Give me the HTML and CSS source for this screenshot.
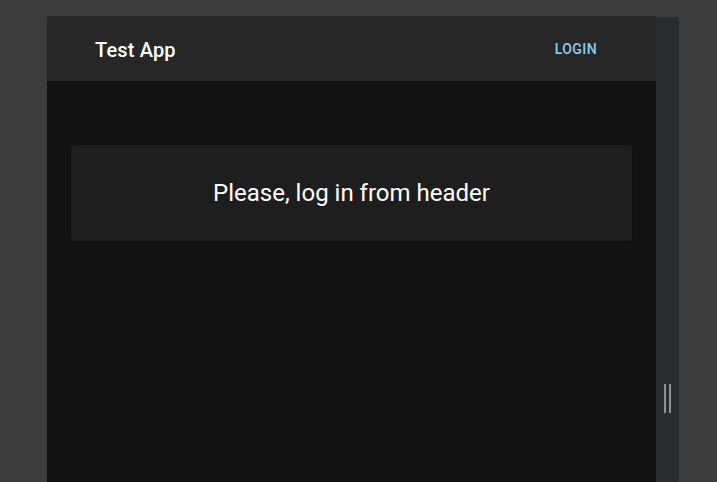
FILE: index.html
```html
<!DOCTYPE html>
<html>
<head>
<meta charset="utf-8">
<link rel="stylesheet" href="styles.css">
</head>
<body>
<div class="stage">
  <div class="device">
    <header class="appbar">
      <div class="title">Test App</div>
      <button class="login">Login</button>
    </header>
    <main class="content">
      <div class="card">Please, log in from header</div>
    </main>
  </div>
  <div class="side">
    <div class="grip"><span></span><span></span></div>
  </div>
</div>
</body>
</html>
```
FILE: styles.css
```css
html, body {
  margin: 0;
  padding: 0;
  height: 100%;
  background: #3c3c3c;
  overflow: hidden;
}
.stage {
  display: flex;
  align-items: stretch;
  padding: 16px 0 0 47px;
  height: calc(100% - 16px);
  font-family: Roboto, "Liberation Sans", sans-serif;
}
.device {
  width: 609px;
  display: flex;
  flex-direction: column;
  background: #121212;
}
.appbar {
  height: 65px;
  background: #272727;
  display: flex;
  align-items: center;
  justify-content: space-between;
  padding: 0 59px 0 48px;
  box-sizing: border-box;
  border-top: 1px solid #2c2c2c;
}
.title {
  color: #fff;
  font-size: 20px;
  font-weight: 500;
  letter-spacing: 0.15px;
  margin-top: 1px;
}
.login {
  background: none;
  border: 0;
  padding: 0;
  color: #90caf9;
  font-family: inherit;
  font-size: 14px;
  font-weight: 500;
  text-transform: uppercase;
  letter-spacing: 0.4px;
}
.content {
  flex: 1;
  padding: 64px 24px 0;
}
.card {
  background: #1e1e1e;
  border-radius: 4px;
  height: 96px;
  display: flex;
  align-items: center;
  justify-content: center;
  color: #fff;
  font-size: 24px;
  box-shadow: 0 1px 2px rgba(0,0,0,0.25);
}
.side {
  width: 23px;
  margin-top: 1px;
  background: #2a2b2e;
  padding: 367px 0 0 8px;
  box-sizing: border-box;
}
.grip {
  display: flex;
  gap: 3px;
}
.grip span {
  width: 2px;
  height: 29px;
  background: #8f9092;
}
```
